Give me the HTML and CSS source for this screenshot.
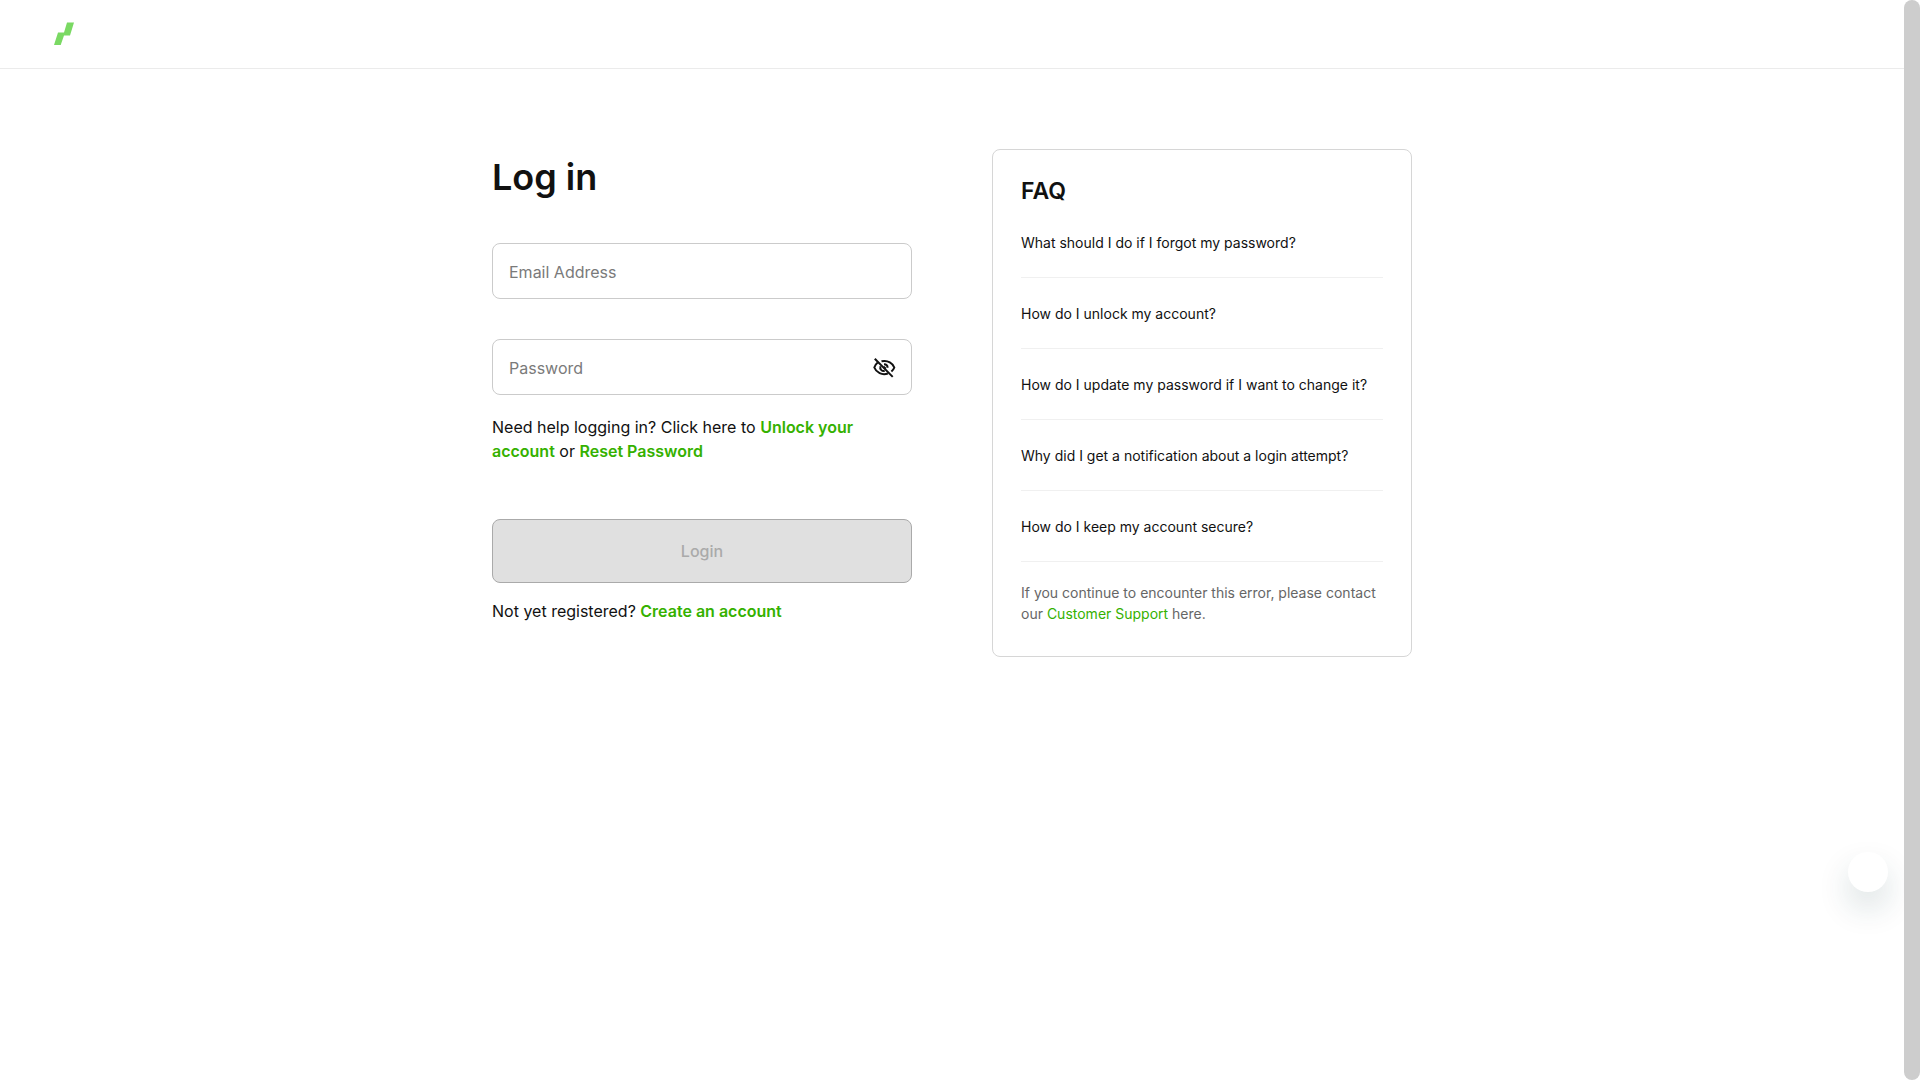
FILE: index.html
```html
<!DOCTYPE html>
<html lang="en">
<head>
    <meta charset="UTF-8">
    <meta name="viewport" content="width=device-width, initial-scale=1.0">
    <title>Log in</title>
    <link rel="stylesheet" href="styles.css">
</head>
<body>

<div class="page">
    <header class="header">
        <a href="#" class="logo" aria-label="Home">
            <svg width="20" height="23" viewBox="0 0 20 23">
                <path fill="#7ad963" d="M13 .5h7l-4 13h-6L6.700 23H0l4-12.500h6z"/>
            </svg>
        </a>
    </header>

    <main class="content">
        <form class="login">
            <h1>Log in</h1>
            <div class="field">
                <input type="email" placeholder="Email Address" aria-label="Email Address">
            </div>
            <div class="field">
                <input type="password" placeholder="Password" aria-label="Password">
                <button type="button" class="toggle" aria-label="Show password">
                    <svg width="24" height="24" viewBox="0 0 24 24" fill="none" stroke="#111" stroke-width="2">
                        <path d="M9.500 5.300C16 3.700 21 7.500 22.300 11.500c-.6 1.600-1.600 3-2.900 4.100"/>
                        <path d="M5.700 6.500C4.200 7.700 3 9.400 2.300 11.500c1.900 5 7.700 8.100 13.600 6"/>
                        <path d="M12 8.200c2 0 3.600 1.500 3.600 3.600M8.500 10.200c-1 3 1.300 5.200 4.200 4.800M11.700 10.800l2 2"/>
                        <path d="M2.800 2.800l17.900 18.100"/>
                    </svg>
                </button>
            </div>
            <p class="help">Need help logging in? Click here to <a href="#">Unlock your account</a> or <a href="#">Reset Password</a></p>
            <button type="submit" class="submit" disabled>Login</button>
            <p class="register">Not yet registered? <a href="#">Create an account</a></p>
        </form>

        <section class="faq">
            <h2>FAQ</h2>
            <ul>
                <li><a href="#">What should I do if I forgot my password?</a></li>
                <li><a href="#">How do I unlock my account?</a></li>
                <li><a href="#">How do I update my password if I want to change it?</a></li>
                <li><a href="#">Why did I get a notification about a login attempt?</a></li>
                <li><a href="#">How do I keep my account secure?</a></li>
            </ul>
            <p>If you continue to encounter this error, please contact our <a href="#">Customer Support</a> here.</p>
        </section>
    </main>
</div>

<div class="scrollbar"></div>
<button type="button" class="chat" aria-label="Open chat"></button>

</body>
</html>
```

FILE: styles.css
```css
* {
    box-sizing: border-box;
}

body {
    display: flex;
    min-height: 100vh;
    margin: 0;
    background: #fff;
    color: #111;
    font-family: Inter, "Liberation Sans", sans-serif;
    font-size: 16px;
    line-height: 24px;
}

h1, h2, p, ul {
    margin: 0;
    padding: 0;
}

a {
    color: #35b100;
    text-decoration: none;
}

input, button {
    font: inherit;
}

.page {
    flex: 1;
}

.header {
    display: flex;
    align-items: center;
    height: 69px;
    padding: 0 54px 2px;
    border-bottom: 1px solid #ebebeb;
}

.logo {
    display: flex;
}

.content {
    display: flex;
    justify-content: center;
    align-items: flex-start;
    gap: 80px;
    padding: 80px 24px;
}

.login, .faq {
    width: 420px;
}

.login h1 {
    margin-bottom: 38px;
    font-size: 36px;
    font-weight: 600;
    line-height: 56px;
}

.field {
    display: flex;
    align-items: center;
    height: 56px;
    padding: 0 15px 0 16px;
    border: 1px solid #cbcbcb;
    border-radius: 8px;
}

.field + .field {
    margin-top: 40px;
}

.field input {
    flex: 1;
    min-width: 0;
    height: 100%;
    padding: 2px 0 0;
    border: 0;
    outline: 0;
    background: none;
    color: #111;
}

.field input::placeholder {
    color: #7a7a7a;
}

.toggle {
    display: flex;
    padding: 2px 0 0;
    border: 0;
    background: none;
    cursor: pointer;
}

.help {
    margin-top: 20px;
}

.login p a {
    font-weight: 600;
}

.submit {
    width: 100%;
    height: 64px;
    margin: 56px 0 16px;
    border: 1px solid #aaa;
    border-radius: 8px;
    background: #e0e0e0;
    color: #aaa;
    font-weight: 500;
}

.faq {
    padding: 26px 28px 32px;
    border: 1px solid #d6d6d6;
    border-radius: 8px;
    font-size: 14px;
}

.faq h2 {
    font-size: 23px;
    font-weight: 600;
    line-height: 31px;
}

.faq ul {
    list-style: none;
}

.faq li {
    padding: 25px 0 23px;
    border-bottom: 1px solid #f0f0f0;
    line-height: 22px;
}

.faq li a {
    color: #111;
}

.faq p {
    margin-top: 20px;
    color: #666;
    line-height: 21px;
}

.scrollbar {
    position: relative;
    z-index: 1;
    width: 16px;
    border-radius: 8px;
    background: #cdcdcd;
}

.chat {
    position: fixed;
    right: 32px;
    bottom: 188px;
    width: 40px;
    height: 40px;
    border: 0;
    border-radius: 50%;
    background: #fff;
    box-shadow: 0 16px 32px rgba(20, 60, 70, 0.16);
}
```
